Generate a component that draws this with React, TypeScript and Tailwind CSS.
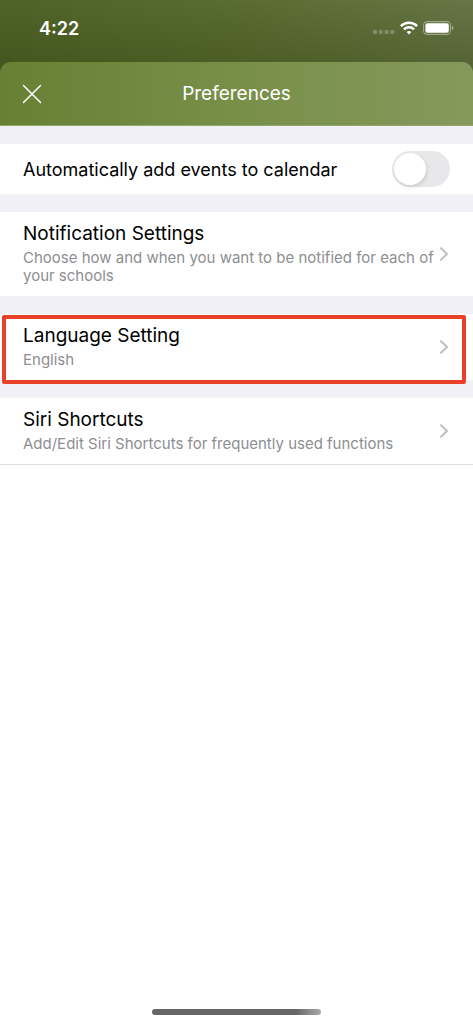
import React, { useState } from 'react';

interface LinkRowProps {
    title: string;
    subtitle: string;
    highlighted?: boolean;
    last?: boolean;
}

function StatusBar() {
    return (
        <div className="flex items-center justify-between h-14 pl-[39px] pr-[19px] text-white">
            <span className="pt-[2px] text-[18px] leading-6 font-semibold">4:22</span>
            <div className="flex items-center gap-[5px]">
                <svg width="22" height="14" viewBox="0 0 22 14" fill="#fff" fillOpacity="0.25" aria-hidden="true">
                    <rect x="0" y="9" width="4" height="4" rx="1.2" />
                    <rect x="5.8" y="9" width="4" height="4" rx="1.2" />
                    <rect x="11.6" y="9" width="4" height="4" rx="1.2" />
                    <rect x="17.3" y="9" width="4" height="4" rx="1.2" />
                </svg>
                <svg width="18" height="14" viewBox="0 0 18 14" fill="none" stroke="#fff" strokeWidth="2.5" aria-hidden="true">
                    <path d="M0.9 5.1a11.6 11.6 0 0 1 16.2 0" />
                    <path d="M3.9 8.4a7.3 7.3 0 0 1 10.2 0" />
                    <path d="M9 13.6 6.6 11.1a3.5 3.5 0 0 1 4.8 0Z" fill="#fff" stroke="none" />
                </svg>
                <svg width="31" height="14" viewBox="0 0 31 14" fill="none" aria-hidden="true">
                    <rect x="0.6" y="0.6" width="26.8" height="12.8" rx="3.6" stroke="#fff" strokeOpacity="0.4" strokeWidth="1.1" />
                    <rect x="2.4" y="2.2" width="23.4" height="9.6" rx="2" fill="#fff" />
                    <path d="M28.8 4.8v4.4c1-.4 1.6-1.2 1.6-2.2s-.6-1.8-1.6-2.2Z" fill="#fff" fillOpacity="0.45" />
                </svg>
            </div>
        </div>
    );
}

function LinkRow({ title, subtitle, highlighted, last }: LinkRowProps) {
    return (
        <a href="#" className={`relative flex items-center bg-white pt-[10px] pb-[11px] pl-[23px] pr-6 ${last ? 'border-b border-[#dedee0]' : ''}`}>
            <div className="flex-1">
                <div className="text-[19px] leading-6 text-black">{title}</div>
                <div className="mt-[3px] text-[15px] leading-[18px] text-[#8e8e91]">{subtitle}</div>
            </div>
            <svg className="shrink-0" width="10" height="16" viewBox="0 0 10 16" fill="none" stroke="#c2c2c5" strokeWidth="2.2" strokeLinecap="round" strokeLinejoin="round" aria-hidden="true">
                <path d="M2 2.2 8 8l-6 5.8" />
            </svg>
            {highlighted && <span className="absolute top-px -bottom-1 left-[2px] right-[7px] border-4 border-[#e84128] rounded-[2px]" />}
        </a>
    );
}

export default function App() {
    const [autoAdd, setAutoAdd] = useState(false);

    return (
        <div className="flex flex-col min-h-screen bg-white font-[Inter,sans-serif]">
            <div className="bg-[linear-gradient(to_bottom,rgba(40,50,20,0)_0px,rgba(35,50,5,0.25)_62px),linear-gradient(to_right,#4f6327,#5a6c30_50%,#677646)]">
                <StatusBar />
                <header className="grid grid-cols-[1fr_auto_1fr] items-center h-16 mt-[6px] px-[22px] rounded-t-[11px] text-white border-b border-[#94a66e] bg-gradient-to-r from-[#678033] via-[#788f48] to-[#85995c]">
                    <button type="button" aria-label="Close" className="justify-self-start">
                        <svg width="20" height="20" viewBox="0 0 20 20" fill="none" stroke="currentColor" strokeWidth="1.5" strokeLinecap="round">
                            <path d="M1.5 1.5l17 17M18.5 1.5l-17 17" />
                        </svg>
                    </button>
                    <h1 className="text-[19px] leading-6">Preferences</h1>
                </header>
            </div>

            <main className="flex flex-col gap-[18px] pt-[18px] bg-[#f1f0f6]">
                <label className="flex items-center justify-between h-[50px] px-[23px] bg-white">
                    <span className="pt-[2px] text-[18px] leading-6 text-black">Automatically add events to calendar</span>
                    <span className="flex">
                        <input
                            type="checkbox"
                            role="switch"
                            checked={autoAdd}
                            onChange={(e) => setAutoAdd(e.target.checked)}
                            className="peer sr-only"
                        />
                        <span className="flex w-[58px] h-9 p-[2px] rounded-full bg-[#e8e8ea] peer-checked:justify-end peer-checked:bg-[#34c759]">
                            <span className="w-8 h-8 rounded-full bg-white shadow-[1px_2px_4px_rgba(0,0,0,0.12)]" />
                        </span>
                    </span>
                </label>
                <LinkRow title="Notification Settings" subtitle="Choose how and when you want to be notified for each of your schools" />
                <LinkRow title="Language Setting" subtitle="English" highlighted />
                <LinkRow title="Siri Shortcuts" subtitle="Add/Edit Siri Shortcuts for frequently used functions" last />
            </main>

            <div className="flex justify-center mt-auto pb-[9px]">
                <div className="w-[169px] h-[6px] rounded-full bg-[linear-gradient(to_right,#666_85%,#aaa)]" />
            </div>
        </div>
    );
}
